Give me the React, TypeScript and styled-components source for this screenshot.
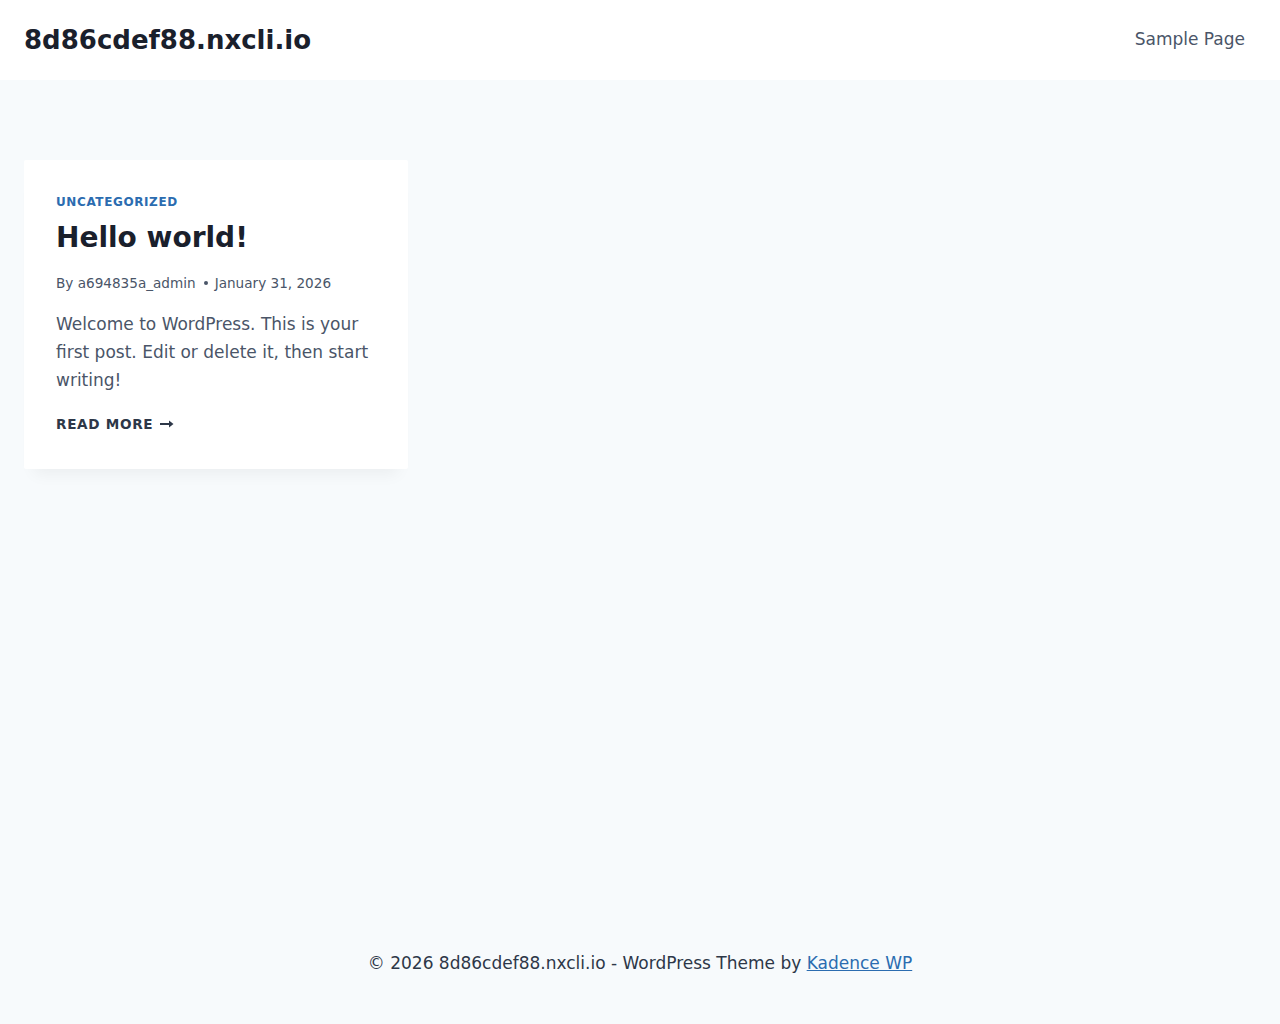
import React from "react";
import styled, { createGlobalStyle } from "styled-components";

const GlobalStyle = createGlobalStyle`
  html, body {
    margin: 0;
    padding: 0;
  }
  body {
    background: #F7FAFC;
    font-family: "DejaVu Sans", "Noto Sans", sans-serif;
    color: #4A5568;
    font-size: 17px;
    line-height: 1.6;
  }
  * { box-sizing: border-box; }
`;

const Page = styled.div`
  min-height: 100vh;
  display: flex;
  flex-direction: column;
`;

const Header = styled.header`
  background: #ffffff;
  height: 80px;
  padding: 0 24px;
  display: flex;
  align-items: center;
  justify-content: space-between;
`;

const SiteTitle = styled.a`
  font-size: 26px;
  font-weight: 700;
  color: #1A202C;
  text-decoration: none;
  line-height: 1.2;
  padding-top: 1px;
`;

const Nav = styled.nav`
  display: flex;
  align-items: center;
`;

const NavLink = styled.a`
  font-size: 17px;
  color: #4A5568;
  text-decoration: none;
  padding: 10px 11px 10px 0;
`;

const Main = styled.main`
  flex: 1;
  padding: 80px 24px;
`;

const Grid = styled.div`
  display: grid;
  grid-template-columns: repeat(3, 1fr);
  gap: 40px;
`;

const Card = styled.article`
  background: #ffffff;
  border-radius: 2px;
  box-shadow: 0px 15px 15px -10px rgba(0, 0, 0, 0.05);
  padding: 32px 32px 34px;
  display: flex;
  flex-direction: column;
`;

const Category = styled.a`
  margin-top: 1px;
  font-size: 12px;
  line-height: 19px;
  font-weight: 700;
  text-transform: uppercase;
  letter-spacing: 0.05em;
  color: #2B6CB0;
  text-decoration: none;
`;

const Title = styled.h2`
  margin: 4px 0 0;
  font-size: 28px;
  line-height: 44px;
  font-weight: 700;
  color: #1A202C;
`;

const Meta = styled.div`
  margin-top: 12px;
  font-size: 13.6px;
  line-height: 22px;
  color: #4A5568;
  display: flex;
  align-items: center;
`;

const Dot = styled.span`
  display: inline-block;
  width: 4px;
  height: 4px;
  border-radius: 50%;
  background: #4A5568;
  margin: 0 7px 0 8px;
`;

const Excerpt = styled.p`
  margin: 16px 0 0;
  font-size: 17px;
  line-height: 28px;
  color: #4A5568;
`;

const ReadMore = styled.a`
  margin-top: 19px;
  font-size: 13.6px;
  line-height: 22px;
  font-weight: 700;
  text-transform: uppercase;
  letter-spacing: 0.05em;
  color: #2D3748;
  text-decoration: none;
  display: inline-flex;
  align-items: center;
  gap: 7px;
  align-self: flex-start;
`;

const Footer = styled.footer`
  padding: 49px 24px 47px;
  text-align: center;
  font-size: 17px;
  line-height: 27px;
  color: #2D3748;
`;

const FooterLink = styled.a`
  color: #2B6CB0;
  text-decoration: underline;
`;

const Arrow = () => (
  <svg width="14" height="8" viewBox="0 0 14 8" aria-hidden="true">
    <path d="M0 4h12" stroke="#2D3748" strokeWidth="2" />
    <path d="M9 0.5L13.5 4L9 7.5Z" fill="#2D3748" />
  </svg>
);

export default function App() {
  return (
    <>
      <GlobalStyle />
      <Page>
        <Header>
          <SiteTitle href="#">8d86cdef88.nxcli.io</SiteTitle>
          <Nav>
            <NavLink href="#">Sample Page</NavLink>
          </Nav>
        </Header>
        <Main>
          <Grid>
            <Card>
              <Category href="#">Uncategorized</Category>
              <Title>Hello world!</Title>
              <Meta>
                <span>By a694835a_admin</span>
                <Dot />
                <span>January 31, 2026</span>
              </Meta>
              <Excerpt>
                Welcome to WordPress. This is your first post. Edit or delete it, then start writing!
              </Excerpt>
              <ReadMore href="#">
                Read More <Arrow />
              </ReadMore>
            </Card>
          </Grid>
        </Main>
        <Footer>
          © 2026 8d86cdef88.nxcli.io - WordPress Theme by <FooterLink href="#">Kadence WP</FooterLink>
        </Footer>
      </Page>
    </>
  );
}
